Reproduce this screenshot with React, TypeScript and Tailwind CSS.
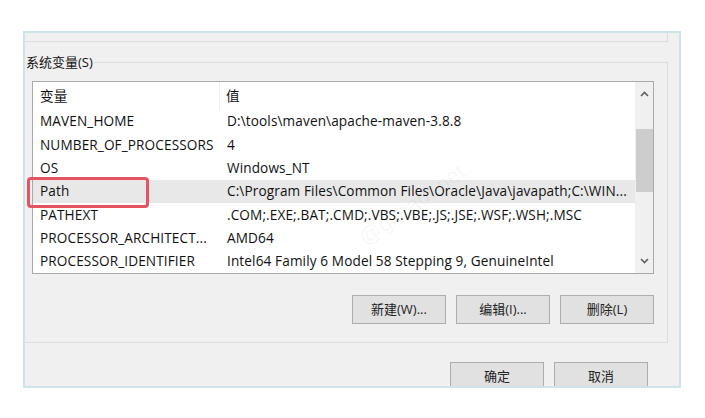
import React from "react";

const rows: [string, string][] = [
  ["MAVEN_HOME", "D:\\tools\\maven\\apache-maven-3.8.8"],
  ["NUMBER_OF_PROCESSORS", "4"],
  ["OS", "Windows_NT"],
  ["Path", "C:\\Program Files\\Common Files\\Oracle\\Java\\javapath;C:\\WIN..."],
  ["PATHEXT", ".COM;.EXE;.BAT;.CMD;.VBS;.VBE;.JS;.JSE;.WSF;.WSH;.MSC"],
  ["PROCESSOR_ARCHITECT...", "AMD64"],
  ["PROCESSOR_IDENTIFIER", "Intel64 Family 6 Model 58 Stepping 9, GenuineIntel"],
];

function Btn({ label }: { label: string }) {
  return (
    <div className="w-[94px] h-[29px] flex items-center justify-center bg-[#e1e1e1] border border-[#adadad] text-[13px] tracking-normal text-[#222]">
      {label}
    </div>
  );
}

export default function App() {
  return (
    <div className="relative w-[705px] h-[418px] bg-white overflow-hidden font-['Open_Sans','Noto_Sans_CJK_SC',sans-serif] text-[13.6px] tracking-[0.12px] text-[#111]">
      <div className="pt-[31px] pl-[23px]">
        <div className="w-[658px] h-[357px] border-2 border-[#cfe4e9] bg-[#f0f0f0] overflow-hidden flex flex-col">
          {/* upper group remnant */}
          <div className="h-[9px] mr-[11px] border-r border-b border-[#dcdcdc] shrink-0" />
          {/* system variables group */}
          <div className="relative mt-[20px] mr-[11px] border border-l-0 border-[#dcdcdc] pl-[7px] pr-[13px] pt-[18px] pb-[18px] shrink-0">
            <div className="absolute -top-[11px] left-[1px] bg-[#f0f0f0] pr-[2px] leading-[20px] text-[13px] tracking-normal">系统变量(S)</div>
            <div className="h-[193px] border border-[#a9a9a9] bg-white flex">
              <div className="flex-1 flex flex-col">
                <div className="h-[28px] flex items-center shrink-0">
                  <div className="w-[187px] h-full pl-[7px] flex items-center border-r border-[#f0f0f0]">变量</div>
                  <div className="pl-[6px]">值</div>
                </div>
                {rows.map(([k, v]) => (
                  <div
                    key={k}
                    className={
                      "h-[23.3px] flex items-center shrink-0 whitespace-nowrap " +
                      (k === "Path" ? "bg-[#e8e8e8]" : "")
                    }
                  >
                    <div className="w-[187px] pl-[7px]">{k}</div>
                    <div className="pl-[7px]">{v}</div>
                  </div>
                ))}
              </div>
              <div className="w-[18px] bg-[#f0f0f0] flex flex-col items-center">
                <div className="h-[24px] flex items-center justify-center">
                  <svg width="9" height="6" viewBox="0 0 9 6">
                    <path d="M1 5 L4.5 1.5 L8 5" fill="none" stroke="#606060" strokeWidth="1.6" />
                  </svg>
                </div>
                <div className="mt-[23px] w-[17px] h-[63px] bg-[#cdcdcd]" />
                <div className="flex-1" />
                <div className="h-[24px] flex items-center justify-center">
                  <svg width="9" height="6" viewBox="0 0 9 6">
                    <path d="M1 1 L4.5 4.5 L8 1" fill="none" stroke="#606060" strokeWidth="1.6" />
                  </svg>
                </div>
              </div>
            </div>
            <div className="mt-[21px] flex justify-end gap-[10px]">
              <Btn label="新建(W)..." />
              <Btn label="编辑(I)..." />
              <Btn label="删除(L)" />
            </div>
          </div>
          {/* OK / Cancel */}
          <div className="mt-[19px] mr-[31px] flex justify-end gap-[10px]">
            <Btn label="确定" />
            <Btn label="取消" />
          </div>
        </div>
      </div>
      {/* red annotation box */}
      <div className="absolute left-[27px] top-[177px] w-[122px] h-[31px] border-[3px] border-[#e65361] rounded-[4px]" />
      {/* watermark */}
      <div className="absolute left-[350px] top-[188px] -rotate-[35deg] text-[22px] tracking-normal text-[#000000]/[0.045] font-['Liberation_Sans',sans-serif] pointer-events-none">
        @gileadt.net
      </div>
    </div>
  );
}
